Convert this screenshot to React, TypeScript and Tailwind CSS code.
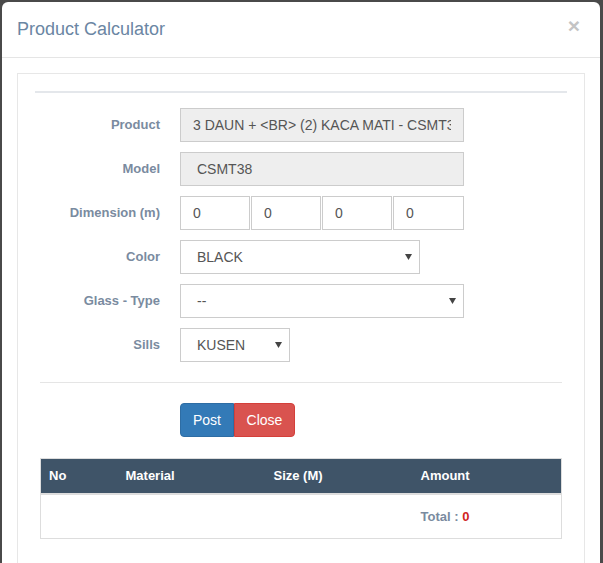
import React from 'react';

const labelCls = 'w-[120px] shrink-0 text-right text-[13px] font-bold text-[#7a8ba0]';
const inputCls =
  'h-[34px] border border-[#ccc] px-[12px] text-[14px] text-[#555] outline-none';

function Caret() {
  return (
    <svg width="7" height="6" viewBox="0 0 7 6" className="absolute right-[8px] top-[14px]">
      <path d="M0 0h7L3.5 6z" fill="#444" />
    </svg>
  );
}

function Select({ value, width }: { value: string; width: string }) {
  return (
    <div className={`relative ${width}`}>
      <div className={`${inputCls} flex items-center bg-white pl-[16px]`}>{value}</div>
      <Caret />
    </div>
  );
}

export default function App() {
  return (
    <div
      className="h-[563px] w-[603px] overflow-hidden bg-[#4a4a4a] pl-[2px] pt-[2px]"
      style={{ fontFamily: '"Liberation Sans", Arial, sans-serif' }}
    >
      <div className="h-[600px] w-[598px] rounded-t-[6px] bg-white">
        {/* header */}
        <div className="flex h-[56px] items-center justify-between border-b border-[#e5e5e5] px-[15px]">
          <h4 className="text-[18px] text-[#6b86a3]">Product Calculator</h4>
          <span className="mr-[5px] mt-[-8px] text-[21px] font-bold leading-none text-[#c4c4c4]">×</span>
        </div>

        {/* body */}
        <div className="p-[15px]">
          <div className="h-[520px] border border-[#e7e7e7] px-[17px] pt-[17px]">
            <div className="h-[2px] bg-[#e4e7eb]" />

            <div className="mt-[15px] px-[5px]">
              <div className="flex flex-col gap-[10px]">
                <div className="flex items-center gap-[20px]">
                  <label className={labelCls}>Product</label>
                  <input
                    readOnly
                    value="3 DAUN + <BR> (2) KACA MATI - CSMT38"
                    className={`${inputCls} w-[284px] bg-[#eee]`}
                  />
                </div>
                <div className="flex items-center gap-[20px]">
                  <label className={labelCls}>Model</label>
                  <input readOnly value="CSMT38" className={`${inputCls} w-[284px] bg-[#eee] pl-[16px]`} />
                </div>
                <div className="flex items-center gap-[20px]">
                  <label className={labelCls}>Dimension (m)</label>
                  <div className="flex gap-[1px]">
                    <input readOnly value="0" className={`${inputCls} w-[70px] bg-white`} />
                    <input readOnly value="0" className={`${inputCls} w-[70px] bg-white`} />
                    <input readOnly value="0" className={`${inputCls} w-[70px] bg-white`} />
                    <input readOnly value="0" className={`${inputCls} w-[71px] bg-white`} />
                  </div>
                </div>
                <div className="flex items-center gap-[20px]">
                  <label className={labelCls}>Color</label>
                  <Select value="BLACK" width="w-[240px]" />
                </div>
                <div className="flex items-center gap-[20px]">
                  <label className={labelCls}>Glass - Type</label>
                  <Select value="--" width="w-[284px]" />
                </div>
                <div className="flex items-center gap-[20px]">
                  <label className={labelCls}>Sills</label>
                  <Select value="KUSEN" width="w-[110px]" />
                </div>
              </div>

              <div className="mt-[20px] h-[1px] bg-[#e5e5e5]" />

              <div className="mt-[20px] flex pl-[140px]">
                <button className="h-[34px] w-[54px] rounded-l-[4px] border border-[#2e6da4] bg-[#337ab7] text-[14px] text-white">
                  Post
                </button>
                <button className="h-[34px] w-[61px] rounded-r-[4px] border border-[#d43f3a] bg-[#d9534f] text-[14px] text-white">
                  Close
                </button>
              </div>

              <table className="mt-[21px] w-[522px] border-collapse border border-[#ddd] text-[13px]">
                <thead>
                  <tr className="h-[35px] border-b-2 border-[#ddd] bg-[#3f5468] text-left font-bold text-white">
                    <th className="w-[77px] px-[8px]">No</th>
                    <th className="w-[148px] px-[8px]">Material</th>
                    <th className="w-[147px] px-[8px]">Size (M)</th>
                    <th className="px-[8px]">Amount</th>
                  </tr>
                </thead>
                <tbody>
                  <tr className="h-[45px]">
                    <td />
                    <td />
                    <td />
                    <td className="px-[8px] pt-[1px] font-bold text-[#7a8ba0]">
                      Total : <span className="text-[#d0251f]">0</span>
                    </td>
                  </tr>
                </tbody>
              </table>
            </div>
          </div>
        </div>
      </div>
    </div>
  );
}
